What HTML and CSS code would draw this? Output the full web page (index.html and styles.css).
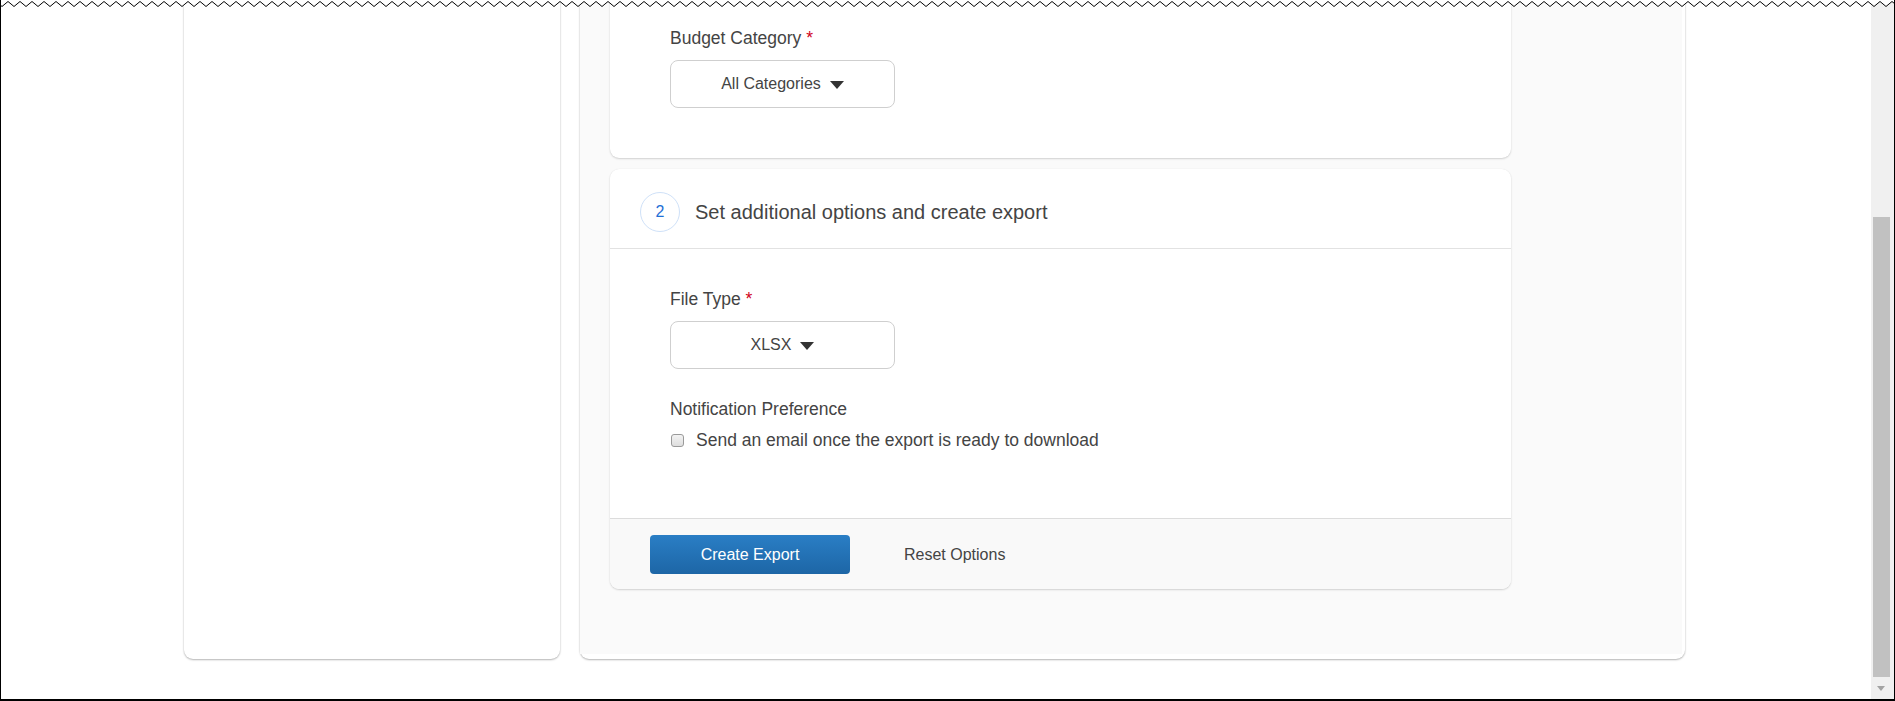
FILE: index.html
```html
<!DOCTYPE html>
<html lang="en">
<head>
<meta charset="utf-8">
<title>Create Export</title>
<link rel="stylesheet" href="styles.css">
</head>
<body>
<div class="frame">
  <div class="view">
    <div class="row">
      <div class="side-card"></div>
      <div class="main-card">
        <div class="panel">
          <section class="card card-first">
            <div class="card-body first-body">
              <div class="field-label">Budget Category <span class="req">*</span></div>
              <button class="dropdown" type="button"><span>All Categories</span><span class="caret"></span></button>
            </div>
          </section>
          <section class="card card-second">
            <div class="card-head">
              <span class="step">2</span>
              <h2 class="card-title">Set additional options and create export</h2>
            </div>
            <div class="card-body second-body">
              <div class="field-label">File Type <span class="req">*</span></div>
              <button class="dropdown" type="button"><span>XLSX</span><span class="caret"></span></button>
              <div class="field-label notif-label">Notification Preference</div>
              <label class="check-row"><span class="checkbox"></span><span>Send an email once the export is ready to download</span></label>
            </div>
            <div class="card-foot">
              <button class="btn-primary" type="button">Create Export</button>
              <button class="btn-link" type="button">Reset Options</button>
            </div>
          </section>
        </div>
      </div>
    </div>
  </div>
  <div class="scrollbar">
    <div class="thumb"></div>
    <div class="arrow-down"></div>
  </div>
  <svg class="torn" width="1895" height="9" viewBox="0 0 1895 9" xmlns="http://www.w3.org/2000/svg">
    <defs>
      <pattern id="zig" x="0" y="0" width="12" height="9" patternUnits="userSpaceOnUse">
        <polygon points="0,0 0,4.8 2,6.5 8,1.5 12,4.8 12,0" fill="#fff"/>
        <polyline points="0,4.8 2,6.5 8,1.5 12,4.8" fill="none" stroke="#000" stroke-width="1"/>
      </pattern>
    </defs>
    <rect x="0" y="0" width="1895" height="9" fill="url(#zig)"/>
  </svg>
</div>
</body>
</html>
```

FILE: styles.css
```css
* { box-sizing: border-box; }

html, body {
  margin: 0;
  padding: 0;
  background: #fff;
}

body {
  font-family: "Liberation Sans", Arial, sans-serif;
  color: #444;
  font-size: 16px;
  line-height: 20px;
}

.frame {
  position: relative;
  width: 1895px;
  height: 701px;
  border-left: 1px solid #000;
  border-right: 1px solid #000;
  border-bottom: 2px solid #000;
  display: flex;
  overflow: hidden;
  background: #fff;
}

.view {
  flex: 1;
  display: flex;
  flex-direction: column;
  justify-content: flex-end;
  padding: 0 0 40px 183px;
  overflow: hidden;
}

.row {
  display: flex;
  gap: 20px;
  align-items: stretch;
}

.side-card {
  width: 376px;
  background: #fff;
  border-radius: 0 0 9px 9px;
  box-shadow: 0 1px 2px rgba(0,0,0,0.28), 0 0 2px rgba(0,0,0,0.08);
}

.main-card {
  width: 1105px;
  background: #fff;
  border-radius: 0 0 9px 9px;
  box-shadow: 0 1px 2px rgba(0,0,0,0.28), 0 0 2px rgba(0,0,0,0.08);
  padding: 0 3px 5px 0;
}

.panel {
  background: #fafafa;
  padding: 0 0 65px 30px;
  display: flex;
  flex-direction: column;
  gap: 11px;
}

.card {
  width: 901px;
  background: #fff;
  border-radius: 9px;
  box-shadow: 0 1px 2px rgba(0,0,0,0.16), 0 0 1px rgba(0,0,0,0.08);
  overflow: hidden;
}

.card-first {
  border-radius: 0 0 9px 9px;
}

.card-body {
  padding-left: 60px;
}

.first-body {
  padding-top: 40px;
  padding-bottom: 50px;
}

.second-body {
  padding-top: 40px;
  padding-bottom: 68px;
}

.field-label {
  height: 20px;
  line-height: 20px;
  font-size: 17.5px;
  color: #444;
  margin-bottom: 12px;
}

.req {
  color: #d0021b;
  margin-left: 0;
}

.dropdown {
  display: flex;
  align-items: center;
  justify-content: center;
  gap: 9px;
  width: 225px;
  height: 48px;
  border: 1px solid #cfcfcf;
  border-radius: 8px;
  background: #fff;
  font-family: "Liberation Sans", Arial, sans-serif;
  font-size: 16px;
  color: #444;
  padding: 0;
  margin: 0;
}

.caret {
  width: 0;
  height: 0;
  border-left: 7px solid transparent;
  border-right: 7px solid transparent;
  border-top: 8px solid #333;
  margin-top: 2px;
}

.second-body .dropdown {
  margin-bottom: 30px;
}

.notif-label {
  margin-bottom: 11px;
}

.check-row {
  display: flex;
  align-items: center;
  gap: 12px;
  height: 20px;
  line-height: 20px;
  font-size: 17.5px;
  color: #444;
}

.checkbox {
  width: 13px;
  height: 13px;
  border: 1px solid #9a9a9a;
  border-radius: 3px;
  background: linear-gradient(#f3f3f3, #dedede);
  margin-left: 1px;
  flex: none;
}

.card-head {
  display: flex;
  align-items: center;
  gap: 15px;
  padding: 23px 30px 16px 30px;
  border-bottom: 1px solid #e2e2e2;
}

.step {
  width: 40px;
  height: 40px;
  border-radius: 50%;
  border: 1px solid #cfe1f8;
  display: flex;
  align-items: center;
  justify-content: center;
  color: #1f6fd6;
  font-size: 16px;
}

.card-title {
  margin: 0;
  font-size: 20px;
  font-weight: normal;
  line-height: 24px;
  color: #444;
}

.card-foot {
  display: flex;
  align-items: center;
  background: #f9f9f9;
  border-top: 1px solid #dcdcdc;
  padding: 16px 40px 15px 40px;
}

.btn-primary {
  width: 200px;
  height: 39px;
  border: none;
  border-radius: 4px;
  background: linear-gradient(#2a7ec5, #1d66a6);
  color: #fff;
  font-family: "Liberation Sans", Arial, sans-serif;
  font-size: 16px;
  padding: 0;
}

.btn-link {
  border: none;
  background: transparent;
  color: #444;
  font-family: "Liberation Sans", Arial, sans-serif;
  font-size: 16px;
  padding: 0;
  margin-left: 54px;
}

.scrollbar {
  width: 23px;
  background: #f0f0f0;
  display: flex;
  flex-direction: column;
}

.thumb {
  margin-top: 217px;
  margin-left: 2px;
  width: 17px;
  height: 460px;
  background: #c1c1c1;
}

.arrow-down {
  margin-top: 9px;
  margin-left: 6px;
  width: 0;
  height: 0;
  border-left: 4px solid transparent;
  border-right: 4px solid transparent;
  border-top: 5px solid #a3a3a3;
}

.torn {
  position: absolute;
  top: 0;
  left: -1px;
  display: block;
}
```
